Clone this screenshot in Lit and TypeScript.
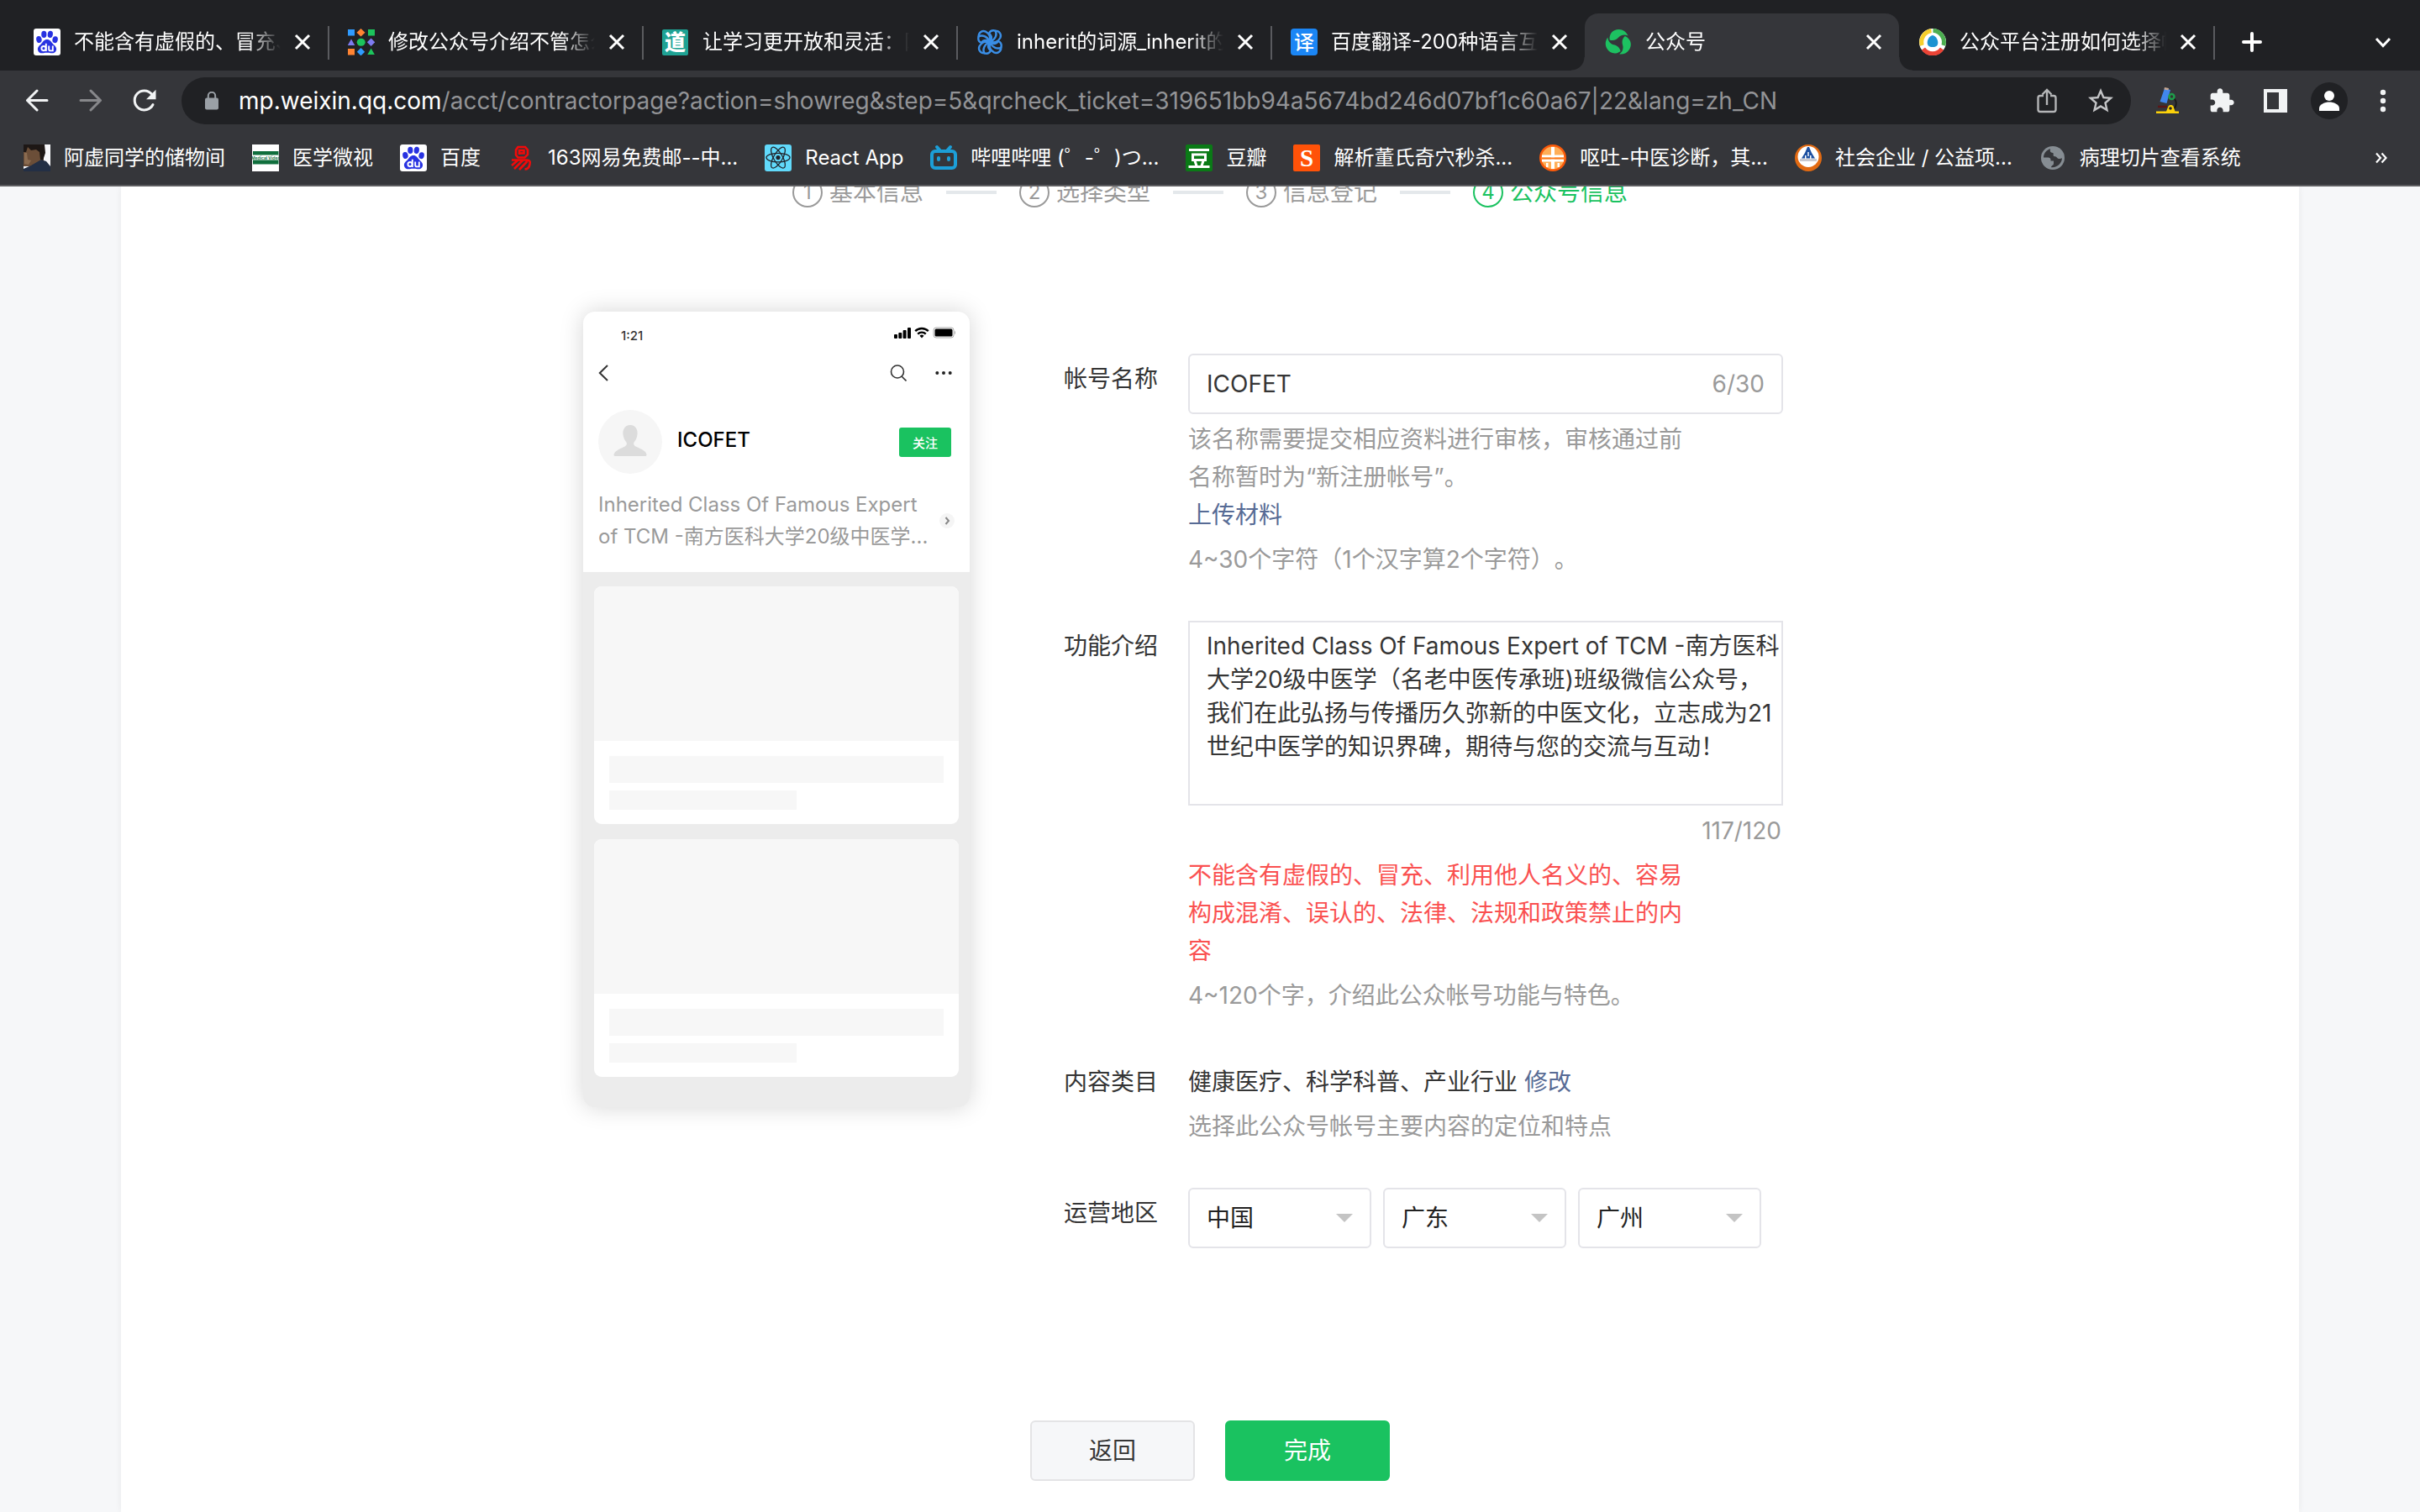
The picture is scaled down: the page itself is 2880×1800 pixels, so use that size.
import { LitElement, html, css, svg, nothing } from "lit";
import { customElement, property, state } from "lit/decorators.js";
import { classMap } from "lit/directives/class-map.js";

const FONT = css`"Inter", "Noto Sans CJK SC", "Noto Sans CJK JP", sans-serif`;

const paw = svg`
  <rect width="32" height="32" rx="3" fill="#fff"/>
  <g fill="#2832e1">
    <ellipse cx="6.4" cy="13" rx="3.2" ry="4" transform="rotate(-12 6.4 13)"/>
    <ellipse cx="12.3" cy="6.9" rx="3.1" ry="4.1"/>
    <ellipse cx="19.8" cy="6.9" rx="3.1" ry="4.1" transform="rotate(8 19.8 6.9)"/>
    <ellipse cx="25.6" cy="13.2" rx="3.2" ry="4" transform="rotate(12 25.6 13.2)"/>
    <path d="M16 13c3.400 0 4.600 2.600 6.800 5 2.400 2.400 4.800 4.200 4.200 7.400-.7 3.600-4 4.200-6.600 3.800-3-.5-5.800-.5-8.800 0-2.600.4-6-.2-6.600-3.800-.6-3.200 1.800-5 4.200-7.400 2.200-2.400 3.400-5 6.800-5z"/>
  </g>
  <g fill="none" stroke="#fff" stroke-width="1.900">
    <circle cx="12" cy="23.600" r="2.600"/><path d="M14.800 17.800v9.200M18.200 20.400v4c0 1.300.8 2 2 2h2.600v-6"/>
  </g>`;

const icons: Record<string, unknown> = {
  baidu: paw,
  shapes: svg`
    <path fill="#2f9bff" d="M0 1h8v7.500H0z"/><path fill="#ff8433" d="M15.500 0l5 4.700-5 4.700-5-4.700z"/><path fill="#1cc45c" d="M24 1h8v7.500h-8z"/>
    <path fill="#7d7bf0" d="M4 12.500l4.300 7.500H-.3z"/><ellipse cx="15.700" cy="16.200" rx="5" ry="4.500" fill="#1cc45c"/><path fill="#7d7bf0" d="M27.600 11.500l4.700 4.700-4.700 4.700-4.700-4.700z"/>
    <path fill="#ff8433" d="M0 24h8v7.500H0z"/><path fill="#2f9bff" d="M15.500 23l4.700 4.700-4.700 4.700-4.700-4.700z"/><path fill="#1cc45c" d="M27.600 23.500l4.300 7.500h-8.600z"/>`,
  dao: svg`<rect y="1" width="31" height="31" rx="2" fill="#1fa294"/><text x="15.500" y="25" text-anchor="middle" font-size="25" font-weight="900" fill="#fff" font-family="Noto Sans CJK SC">道</text>`,
  swirl: svg`<g fill="none" stroke="#3a8ee6" stroke-width="2.400" stroke-linejoin="round">
    ${[0, 90, 180, 270].map((a) => svg`<g transform="rotate(${a} 16 16)"><path d="M16 15.500C17 11 15.500 6 11 3.600 7 1.800 2.600 4.500 2.600 9.500 7 7 12.500 9 16 15.500z"/><path d="M2.600 9.500C1.600 13.500 3.500 16 6 17c2-3 5.500-3.800 10-1.500"/></g>`)}</g>`,
  yi: svg`<rect width="32" height="32" rx="4" fill="#1b86f5"/><text x="16" y="25" text-anchor="middle" font-size="24" font-weight="500" fill="#fff" font-family="Noto Sans CJK SC">译</text>`,
  mp: svg`<g fill="#1dc161">${[0, 120, 240].map((a) => svg`<path transform="rotate(${a} 16 16.500)" d="M5.600 13.500C4.800 6 9.500 1.100 16.500 1c5 0 9 3 11 7.500-3.800-1.800-8-1.300-11 1.700-2.500 2.700-6 4.800-10.900 3.300z"/>`)}</g>`,
  fox: svg`<circle cx="16" cy="16" r="16" fill="#fff"/>
    <g fill="none" stroke-width="5"><path stroke="#f6cf2c" d="M3.400 20A13.400 13.400 0 0 1 14.500 2.700"/><path stroke="#4cae50" d="M16.500 2.600A13.400 13.400 0 0 1 28.800 20"/><path stroke="#ea4335" d="M5 24a13.400 13.400 0 0 0 22 0"/></g>
    <path fill="#fff" d="M16 4.500c6 3 10.500 10 10.500 17-6 3.500-15 3.500-21 0C5.500 14.500 10 7.500 16 4.500z"/><path fill="#1c93d1" d="M16 8c4 1 6.300 5 6.300 9 0 3-2 5-6.300 5s-6.300-2-6.300-5c0-4 2.300-8 6.300-9z"/>`,
  photo: svg`<rect width="32" height="32" fill="#f7f7fa"/><path fill="#6b4e38" d="M0 0h24v26H0z"/><path fill="#1d1715" d="M0 0h25l1 10-3 9-3-1-1-9-4-3-6 1-4-4-2 6H0z"/><path fill="#8a6b50" d="M1 10h3l1 8 4 1-3 5-5-1z"/><path fill="#232f45" d="M0 29l9-4 12-7 6 2 5 6v6H0z"/>`,
  video: svg`<rect width="32" height="32" fill="#fff"/><path fill="#0f6e3c" d="M1 8h30.500v15.500H1z"/><path fill="#fff" d="M1 12.500h30.500v6H1z"/><text x="16.200" y="17.500" text-anchor="middle" font-size="5" font-weight="600" fill="#0f6e3c" font-family="Inter">Medical Video</text>`,
  netease: svg`<g fill="none" stroke="#f20a0a" stroke-width="2.600"><path d="M12.500 3h8.500l3 3.500v5.500l-3.500 3.500h-8L10 12.500v-6z"/><path d="M14 12V7h5.500v3.500H14"/><path d="M5 18.500h18c3 0 4.500 2 3.500 5-.6 3.500-2.500 6-6 6M12 19l-7 6M18 19L8 29M23.500 20L14 30"/></g>`,
  react: svg`<rect width="32" height="32" rx="3" fill="#61dafb"/><g fill="none" stroke="#20232a" stroke-width="1.300"><ellipse cx="16" cy="15.600" rx="14" ry="5.300"/><ellipse cx="16" cy="15.600" rx="14" ry="5.300" transform="rotate(60 16 15.600)"/><ellipse cx="16" cy="15.600" rx="14" ry="5.300" transform="rotate(120 16 15.600)"/></g><circle cx="16" cy="15.600" r="2.600" fill="#20232a"/>`,
  bili: svg`<g fill="none" stroke="#1c9fd8" stroke-width="4" stroke-linecap="round" stroke-linejoin="round"><rect x="2" y="8" width="28" height="20" rx="4"/><path d="M8 3l3.500 4M24 3l-3.500 4"/><path d="M10 16v2M22 16v2"/></g>`,
  dou: svg`<rect width="32" height="32" rx="2" fill="#0a7a16"/><g fill="none" stroke="#fff" stroke-width="3"><path d="M4 6.500h24M3.500 26.500h25M11 19.500l2 6M21 19.500l-2 6"/><path d="M8.500 12h15v6.500h-15z"/></g>`,
  sogou: svg`<rect width="32" height="32" rx="2" fill="#ff5208"/><text x="16" y="26" text-anchor="middle" font-size="29" font-weight="700" fill="#fff" font-family="Liberation Serif">S</text>`,
  zhong: svg`<circle cx="16" cy="16" r="16" fill="#fb5a0a"/><circle cx="16" cy="16" r="13.500" fill="#ffae57"/><path fill="#fff" d="M14 3h4v26h-4z"/><path fill="#fff" d="M3 12.500h26v3H3zM3 17.500h26v3H3zM8 22h2.500v5H8zM21.500 22H24v5h-2.500z"/><path fill="#fb7a1f" d="M3 15.500h26v2H3z"/>`,
  org: svg`<circle cx="16" cy="16" r="16" fill="#e26a12"/><circle cx="16" cy="14.500" r="12.500" fill="#fff"/><path fill="#1c4fa0" d="M15 3h2l3 7 4 6.500H8L12 10z"/><path fill="#fff" d="M12 13h1.500v4H12zM18 13h1.500v4H18zM15.300 9h1.400v5h-1.400z"/><path fill="#c9c9cf" d="M6 17h20v3H6z"/>`,
  globe: svg`<circle cx="16" cy="16" r="14" fill="#868d93"/><path fill="#35363a" d="M13 5.200c-4.500 1.200-8 5.300-8 10.300h5.500c1.800 0 3 1 3 2.800v1.200H17v3.300c0 1-.7 2-1.800 2.300L13.800 27c6.500 1.200 13-4 13.200-10.700-1.700.8-3.700 1.100-5.200.1-1.300-1-1.300-2-3.300-2.200-1.700-.1-2.200-1-1.800-2.500.3-1.200-.3-1.900-1.700-2-1.300-.1-2.200-1-2.200-2.200z"/>`,
};

const fav = (name: string) =>
  html`<svg class="fav" viewBox="0 0 32 32" aria-hidden="true">${icons[name]}</svg>`;

interface Entry { icon: string; text: string; active?: boolean }

const TABS: Entry[] = [
  { icon: "baidu", text: "不能含有虚假的、冒充、" },
  { icon: "shapes", text: "修改公众号介绍不管怎么" },
  { icon: "dao", text: "让学习更开放和灵活：网" },
  { icon: "swirl", text: "inherit的词源_inherit的" },
  { icon: "yi", text: "百度翻译-200种语言互" },
  { icon: "mp", text: "公众号", active: true },
  { icon: "fox", text: "公众平台注册如何选择帐" },
];

const BOOKMARKS: Entry[] = [
  { icon: "photo", text: "阿虚同学的储物间" },
  { icon: "video", text: "医学微视" },
  { icon: "baidu", text: "百度" },
  { icon: "netease", text: "163网易免费邮--中..." },
  { icon: "react", text: "React App" },
  { icon: "bili", text: "哔哩哔哩 (゜-゜)つ..." },
  { icon: "dou", text: "豆瓣" },
  { icon: "sogou", text: "解析董氏奇穴秒杀..." },
  { icon: "zhong", text: "呕吐-中医诊断，其..." },
  { icon: "org", text: "社会企业 / 公益项..." },
  { icon: "globe", text: "病理切片查看系统" },
];

@customElement("browser-chrome")
class BrowserChrome extends LitElement {
  static styles = css`
    :host { display: block; font-family: ${FONT}; color: #fff; background: #35363a; border-bottom: 2px solid #5d5d60; }
    button { border: 0; padding: 0; background: none; color: inherit; display: flex; align-items: center; justify-content: center; }
    svg { flex: none; display: block; }
    .fav { width: 32px; height: 32px; }
    .tabs { display: flex; align-items: flex-end; height: 84px; padding: 0 12px 0 16px; box-sizing: border-box; background: #202124; }
    .tab { position: relative; flex: 0 1 374px; min-width: 0; height: 68px; box-sizing: border-box; display: flex; align-items: center; padding: 0 14px 0 24px; }
    .tab::after { content: ""; position: absolute; right: -2px; top: 15px; width: 2px; height: 40px; background: #5a5b5f; }
    .tab.plain::after { display: none; }
    .tab.active { background: #35363a; border-radius: 16px 16px 0 0; }
    .flare { position: absolute; bottom: 0; width: 16px; height: 16px; }
    .flare.left { left: -16px; background: radial-gradient(circle at 0 0, #202124 15px, #35363a 16px); }
    .flare.right { right: -16px; background: radial-gradient(circle at 100% 0, #202124 15px, #35363a 16px); }
    .title { flex: 1; min-width: 0; margin: 0 10px 0 16px; font-size: 24px; line-height: 36px; white-space: nowrap; overflow: hidden; -webkit-mask-image: linear-gradient(to right, #000 84%, transparent); mask-image: linear-gradient(to right, #000 84%, transparent); }
    .close { width: 32px; height: 32px; }
    .new { width: 64px; height: 68px; margin-left: 14px; }
    .list { width: 64px; height: 68px; margin-left: auto; }
    .bar { display: flex; align-items: center; padding: 8px 12px; }
    .nav { width: 64px; height: 56px; }
    .omni { flex: 1; min-width: 0; height: 56px; margin: 0 12px; padding: 0 4px 0 28px; box-sizing: border-box; border-radius: 28px; background: #202124; display: flex; align-items: center; font-size: 28px; }
    .host { margin-left: 24px; line-height: 40px; }
    .url { flex: 1; min-width: 0; border: 0; padding: 0; outline: 0; background: none; color: #929396; font-family: inherit; font-size: 28px; height: 40px; }
    .marks { display: flex; align-items: center; gap: 32px; height: 64px; padding: 0 28px; }
    .mark { display: flex; align-items: center; gap: 16px; color: #fff; text-decoration: none; font-size: 24px; line-height: 36px; white-space: nowrap; }
    .more { margin-left: auto; width: 36px; height: 36px; }
  `;

  render() {
    const activeAt = TABS.findIndex((t) => t.active);
    return html`
      <nav class="tabs">
        ${TABS.map((t, i) => html`
          <div class=${classMap({ tab: true, active: !!t.active, plain: i === activeAt || i === activeAt - 1 })}>
            ${t.active ? html`<span class="flare left"></span><span class="flare right"></span>` : nothing}
            ${fav(t.icon)}
            <span class="title">${t.text}</span>
            <button class="close" aria-label="关闭标签页">
              <svg width="20" height="20" viewBox="0 0 20 20" fill="none" stroke="#fff" stroke-width="3"><path d="M2 2l16 16M18 2L2 18"/></svg>
            </button>
          </div>`)}
        <button class="new" aria-label="新标签页">
          <svg width="24" height="24" viewBox="0 0 24 24" fill="none" stroke="#fff" stroke-width="4" stroke-linecap="round"><path d="M12 2v20M2 12h20"/></svg>
        </button>
        <button class="list" aria-label="搜索标签页">
          <svg width="20" height="20" viewBox="0 0 20 20" fill="none" stroke="#fff" stroke-width="3"><path d="M2 6l8 8.500L18 6"/></svg>
        </button>
      </nav>
      <div class="bar">
        <button class="nav" aria-label="后退">
          <svg width="28" height="28" viewBox="0 0 28 28" fill="none" stroke="#f1f3f4" stroke-width="3" stroke-linecap="round" stroke-linejoin="round"><path d="M26 13.500H2.500M14 2L2.500 13.500 14 25"/></svg>
        </button>
        <button class="nav" aria-label="前进">
          <svg width="28" height="28" viewBox="0 0 28 28" fill="none" stroke="#87888b" stroke-width="3" stroke-linecap="round" stroke-linejoin="round"><path d="M2 13.500h23.500M14 2l11.500 11.500L14 25"/></svg>
        </button>
        <button class="nav" aria-label="重新加载">
          <svg width="28" height="28" viewBox="0 0 28 28"><path d="M24 18.500A11.500 11.500 0 1 1 22.500 6" fill="none" stroke="#f1f3f4" stroke-width="3"  stroke-linecap="round"/><path fill="#f1f3f4" d="M27.500.8v11.400H16z"/></svg>
        </button>
        <div class="omni">
          <svg width="16" height="22" viewBox="0 0 16 22"><rect y="7.500" width="16" height="14" rx="2" fill="#9aa0a6"/><path d="M3.800 8V5a4.200 4.200 0 0 1 8.400 0v3" fill="none" stroke="#9aa0a6" stroke-width="2"/></svg>
          <label class="host" for="url">mp.weixin.qq.com</label>
          <input class="url" id="url" value="/acct/contractorpage?action=showreg&step=5&qrcheck_ticket=319651bb94a5674bd246d07bf1c60a67|22&lang=zh_CN">
          <button class="nav" aria-label="分享">
            <svg width="24" height="30" viewBox="0 0 24 30" fill="none" stroke="#b4b5b7" stroke-width="2.400"><path d="M8 9H4a2.500 2.500 0 0 0-2.500 2.500v14A2.500 2.500 0 0 0 4 28h16a2.500 2.500 0 0 0 2.500-2.500v-14A2.500 2.500 0 0 0 20 9h-4M12 20V2.500M6.500 7.500L12 2l5.500 5.500"/></svg>
          </button>
          <button class="nav" aria-label="添加书签">
            <svg width="36" height="36" viewBox="0 0 24 24" fill="#c4c5c7"><path d="M22 9.240l-7.190-.62L12 2 9.190 8.630 2 9.240l5.460 4.730L5.820 21 12 17.270 18.180 21l-1.630-7.030L22 9.240zM12 15.400l-3.760 2.270 1-4.280-3.320-2.880 4.380-.38L12 6.100l1.710 4.040 4.380.38-3.320 2.880 1 4.280L12 15.400z"/></svg>
          </button>
        </div>
        <button class="nav" aria-label="显微镜">
          <svg width="32" height="32" viewBox="0 0 32 32"><path d="M12 1l7 2-4.500 16-8-2z" fill="#4187ee"/><path d="M12 0l5 1-.5 2.500-5-1z" fill="#c8a890"/><path d="M22 12c5 4 5 10 0 15" fill="none" stroke="#1a1a1a" stroke-width="2"/><circle cx="20.500" cy="11" r="3" fill="#333" stroke="#1e9c4a" stroke-width="2.500"/><path d="M4 23h11" stroke="#5b1616" stroke-width="2.500"/><path d="M2 31v-2.500h12l2.500-6c1-2 5-2 6 0l2 6H29V31z" fill="#fcd20a"/><circle cx="19" cy="25" r="1.800" fill="#222"/></svg>
        </button>
        <button class="nav" aria-label="扩展程序">
          <svg width="32" height="32" viewBox="0 0 24 24" fill="#f1f3f4"><path d="M20.500 11H19V7c0-1.100-.9-2-2-2h-4V3.500C13 2.120 11.880 1 10.500 1S8 2.120 8 3.500V5H4c-1.100 0-1.990.9-1.990 2v3.800H3.500c1.490 0 2.700 1.210 2.700 2.700s-1.210 2.700-2.700 2.700H2V20c0 1.100.9 2 2 2h3.800v-1.500c0-1.490 1.210-2.700 2.700-2.700 1.490 0 2.700 1.210 2.700 2.700V22H17c1.100 0 2-.9 2-2v-4h1.500c1.380 0 2.500-1.120 2.500-2.500S21.880 11 20.500 11z"/></svg>
        </button>
        <button class="nav" aria-label="侧边栏">
          <svg width="28" height="28" viewBox="0 0 28 28"><path fill="#f1f3f4" fill-rule="evenodd" d="M0 0h28v28H0zM4 4v20h14V4z"/></svg>
        </button>
        <button class="nav" aria-label="用户">
          <svg width="44" height="44" viewBox="0 0 44 44"><circle cx="22" cy="22" r="22" fill="#202124"/><circle cx="22" cy="16" r="6" fill="#fff"/><path fill="#fff" d="M10 34v-3c0-5 7-7.500 12-7.500S34 26 34 31v3z"/></svg>
        </button>
        <button class="nav" aria-label="菜单">
          <svg width="8" height="28" viewBox="0 0 8 28" fill="#f1f3f4"><circle cx="4" cy="4" r="3.200"/><circle cx="4" cy="14" r="3.200"/><circle cx="4" cy="24" r="3.200"/></svg>
        </button>
      </div>
      <nav class="marks">
        ${BOOKMARKS.map((b) => html`<a class="mark" href="#">${fav(b.icon)}<span>${b.text}</span></a>`)}
        <button class="more" aria-label="更多书签">
          <svg width="16" height="14" viewBox="0 0 16 14" fill="none" stroke="#fff" stroke-width="2.200"><path d="M2 1.500L7 7l-5 5.500M8.500 1.500l5 5.500-5 5.500"/></svg>
        </button>
      </nav>
    `;
  }
}

@customElement("phone-preview")
class PhonePreview extends LitElement {
  @property() name = "";

  static styles = css`
    :host { display: block; font-family: ${FONT}; width: 460px; border-radius: 14px; overflow: hidden; background: #ececec; box-shadow: 0 0 28px rgba(0, 0, 0, 0.17); }
    svg { display: block; flex: none; }
    button { border: 0; padding: 0; background: none; }
    .top { background: #fff; height: 310px; box-sizing: border-box; padding: 15px 18px 0; }
    .status { display: flex; align-items: center; height: 20px; padding-left: 27px; gap: 4px; font-size: 15px; font-weight: 500; color: #333; margin-right: -2px; }
    .time { flex: 1; padding-top: 6px; }
    .bar { display: flex; align-items: center; justify-content: space-between; height: 20px; margin-top: 28px; }
    .tools { display: flex; align-items: center; gap: 34px; padding-right: 3px; }
    .who { display: flex; align-items: center; margin-top: 34px; padding-right: 4px; }
    .nick { flex: 1; margin-left: 18px; padding-bottom: 4px; font-size: 24px; line-height: 32px; font-weight: 500; color: #000; }
    .follow { width: 62px; height: 35px; border-radius: 3px; background: #1ac260; color: #fff; font-family: inherit; font-size: 15px; font-weight: 500; }
    .about { display: flex; align-items: center; justify-content: space-between; margin-top: 18px; font-size: 24px; line-height: 38px; color: #9a9a9a; white-space: nowrap; }
    .feed { display: flex; flex-direction: column; gap: 18px; padding: 17px 13px 36px; }
    .post { border-radius: 9px; overflow: hidden; background: #fff; }
    .cover { height: 184px; background: #f7f7f7; }
    .lines { padding: 18px 18px 17px; display: flex; flex-direction: column; gap: 9px; }
    .long { height: 32px; background: #f7f7f7; }
    .short { height: 23px; width: 56%; background: #f7f7f7; }
  `;

  render() {
    const post = html`<div class="post"><div class="cover"></div><div class="lines"><div class="long"></div><div class="short"></div></div></div>`;
    return html`
      <div class="top">
        <div class="status">
          <span class="time">1:21</span>
          <svg width="20" height="14" viewBox="0 0 20 14" fill="#000"><rect y="9" width="4" height="5" rx="1"/><rect x="5.300" y="7" width="4" height="7" rx="1"/><rect x="10.600" y="4" width="4" height="10" rx="1"/><rect x="16" y="1" width="4" height="13" rx="1"/></svg>
          <svg width="18" height="14" viewBox="0 0 18 14" fill="none" stroke="#000" stroke-width="2.400"><path d="M1.200 5.200a11 11 0 0 1 15.600 0M4.200 8.600a6.800 6.800 0 0 1 9.600 0"/><path d="M6.500 10.800L9 13.500l2.500-2.700a3.600 3.600 0 0 0-5 0z" fill="#000" stroke="none"/></svg>
          <svg width="28" height="14" viewBox="0 0 28 14"><rect x="1" y="1" width="24" height="12" rx="3" fill="none" stroke="#aaa"/><rect x="2.500" y="2.500" width="21" height="9" rx="1.500"/><path d="M26 5v4c1.300-.4 1.300-3.600 0-4z" fill="#aaa"/></svg>
        </div>
        <div class="bar">
          <svg width="12" height="20" viewBox="0 0 12 20" fill="none" stroke="#333" stroke-width="2"><path d="M11 1L1.800 10 11 19"/></svg>
          <div class="tools">
            <svg width="20" height="20" viewBox="0 0 20 20" fill="none" stroke="#333" stroke-width="1.600"><circle cx="9" cy="8.500" r="7.500"/><path d="M14 14l5.500 5.500"/></svg>
            <svg width="20" height="6" viewBox="0 0 20 6" fill="#222"><circle cx="2.300" cy="3" r="2"/><circle cx="10" cy="3" r="2"/><circle cx="17.700" cy="3" r="2"/></svg>
          </div>
        </div>
        <div class="who">
          <svg width="76" height="76" viewBox="0 0 76 76"><circle cx="38" cy="38" r="38" fill="#f6f6f6"/><path fill="#dcdcdc" d="M38 18c5.500 0 9 4.500 8.600 10.500-.3 4.500-2 7.500-3.900 9.700-1.200 1.600-.6 4 1.300 5 4.500 2.200 13.500 5.800 13.500 10.300 0 1.400-.8 1.500-2.500 1.500H21c-1.700 0-2.500-.1-2.500-1.500C18.500 49 27.500 45.400 32 43.200c1.900-1 2.500-3.400 1.300-5-1.900-2.200-3.600-5.200-3.900-9.700C29 22.500 32.500 18 38 18z"/></svg>
          <span class="nick">${this.name}</span>
          <button class="follow">关注</button>
        </div>
        <div class="about">
          <span>Inherited Class Of Famous Expert<br>of TCM -南方医科大学20级中医学...</span>
          <svg width="18" height="18" viewBox="0 0 18 18"><circle cx="9" cy="9" r="9" fill="#f5f5f5"/><path d="M7.500 5l3.500 4-3.500 4" fill="none" stroke="#888" stroke-width="2"/></svg>
        </div>
      </div>
      <div class="feed">${post}${post}</div>
    `;
  }
}

@customElement("app-root")
class AppRoot extends LitElement {
  @state() private name = "ICOFET";
  @state() private intro =
    "Inherited Class Of Famous Expert of TCM -南方医科大学20级中医学（名老中医传承班)班级微信公众号，我们在此弘扬与传播历久弥新的中医文化，立志成为21世纪中医学的知识界碑，期待与您的交流与互动！";

  static styles = css`
    :host { display: flex; flex-direction: column; min-height: 100vh; font-family: ${FONT}; font-size: 28px; line-height: 45px; color: #353535; background: #f6f7f9; text-spacing-trim: space-all; }
    a { color: #576b95; text-decoration: none; }
    .page { flex: 1; display: flex; flex-direction: column; overflow: hidden; }
    .sheet { flex: 1; width: 90%; margin: 0 auto; box-sizing: border-box; padding-bottom: 36px; background: #fff; box-shadow: 0 0 8px rgba(0, 0, 0, 0.06); }
    .steps { display: flex; align-items: center; justify-content: center; gap: 27px; height: 40px; margin: -13px 0 0; color: #9a9a9a; }
    .step { display: flex; align-items: center; gap: 8px; line-height: 40px; }
    .step.now { color: #1ac260; }
    .num { box-sizing: border-box; width: 36px; height: 36px; border: 2px solid; border-radius: 50%; font-size: 24px; line-height: 32px; text-align: center; }
    .rule { width: 60px; height: 4px; background: #e4e8eb; }
    .body { display: flex; justify-content: center; align-items: flex-start; margin-top: 122px; }
    .form { display: flex; flex-direction: column; gap: 50px; margin-left: 112px; padding-top: 50px; width: 920px; }
    .row { display: grid; grid-template-columns: 148px 1fr; }
    .label { padding-top: 8px; }
    .field { display: flex; flex-direction: column; gap: 8px; min-width: 0; }
    .hint { margin: 0; width: 600px; color: #9a9a9a; }
    .bad { color: #fa5151; }
    .box { display: flex; align-items: center; width: 708px; height: 72px; box-sizing: border-box; border: 2px solid #e4e4e9; border-radius: 6px; padding: 0 20px; color: #9a9a9a; }
    .text { flex: 1; min-width: 0; border: 0; outline: 0; padding: 0; font: inherit; color: #353535; background: none; }
    .area { display: block; width: 708px; height: 220px; box-sizing: border-box; border: 2px solid #e4e4e9; padding: 8px 0 8px 20px; font: inherit; line-height: 40px; color: #353535; resize: none; outline: 0; overflow: hidden; background: none; text-spacing-trim: inherit; }
    .count { width: 706px; text-align: right; color: #9a9a9a; }
    .cats { padding-top: 8px; }
    .regions { display: flex; gap: 14px; }
    .pick { display: grid; grid-template-columns: 218px; align-items: center; }
    .select { grid-area: 1 / 1; height: 72px; appearance: none; -webkit-appearance: none; border: 2px solid #e4e4e9; border-radius: 6px; padding: 0 20px; font: inherit; color: #222; background: #fff; }
    .arrow { grid-area: 1 / 1; justify-self: end; margin-right: 22px; pointer-events: none; }
    .actions { display: flex; justify-content: center; gap: 36px; margin-top: 205px; }
    .btn { width: 196px; height: 72px; box-sizing: border-box; border: 2px solid #e4e4e6; border-radius: 6px; font: inherit; color: #353535; background: #f6f7f9; padding: 0; }
    .btn.go { border-color: #1ac260; background: #1ac260; color: #fff; }
  `;

  render() {
    const steps = ["基本信息", "选择类型", "信息登记", "公众号信息"];
    const regions = [["国家", "中国"], ["省份", "广东"], ["城市", "广州"]];
    return html`
      <browser-chrome></browser-chrome>
      <main class="page">
        <div class="sheet">
          <div class="steps">
            ${steps.map((s, i) => html`
              ${i ? html`<span class="rule"></span>` : nothing}
              <span class=${classMap({ step: true, now: i === 3 })}><span class="num">${i + 1}</span>${s}</span>`)}
          </div>
          <div class="body">
            <phone-preview .name=${this.name}></phone-preview>
            <form class="form" @submit=${(e: Event) => e.preventDefault()}>
              <div class="row">
                <label class="label" for="name">帐号名称</label>
                <div class="field">
                  <div class="box">
                    <input class="text" id="name" .value=${this.name} @input=${(e: Event) => (this.name = (e.target as HTMLInputElement).value)}>
                    <span>${this.name.length}/30</span>
                  </div>
                  <p class="hint">该名称需要提交相应资料进行审核，审核通过前名称暂时为“新注册帐号”。<br><a href="#">上传材料</a></p>
                  <p class="hint">4~30个字符（1个汉字算2个字符）。</p>
                </div>
              </div>
              <div class="row">
                <label class="label" for="intro">功能介绍</label>
                <div class="field">
                  <textarea class="area" id="intro" spellcheck="false" .value=${this.intro} @input=${(e: Event) => (this.intro = (e.target as HTMLTextAreaElement).value)}></textarea>
                  <div class="count">117/120</div>
                  <p class="hint bad">不能含有虚假的、冒充、利用他人名义的、容易构成混淆、误认的、法律、法规和政策禁止的内容</p>
                  <p class="hint">4~120个字，介绍此公众帐号功能与特色。</p>
                </div>
              </div>
              <div class="row">
                <div class="label">内容类目</div>
                <div class="field">
                  <div class="cats">健康医疗、科学科普、产业行业 <a href="#">修改</a></div>
                  <p class="hint">选择此公众号帐号主要内容的定位和特点</p>
                </div>
              </div>
              <div class="row">
                <label class="label" for="region0">运营地区</label>
                <div class="regions">
                  ${regions.map(([kind, place], i) => html`
                    <div class="pick">
                      <select class="select" id="region${i}" aria-label=${kind}><option>${place}</option></select>
                      <svg class="arrow" width="20" height="10" viewBox="0 0 20 10"><path d="M0 0h20L10 10z" fill="#c4c4c4"/></svg>
                    </div>`)}
                </div>
              </div>
            </form>
          </div>
          <div class="actions">
            <button class="btn">返回</button>
            <button class="btn go">完成</button>
          </div>
        </div>
      </main>
    `;
  }
}
